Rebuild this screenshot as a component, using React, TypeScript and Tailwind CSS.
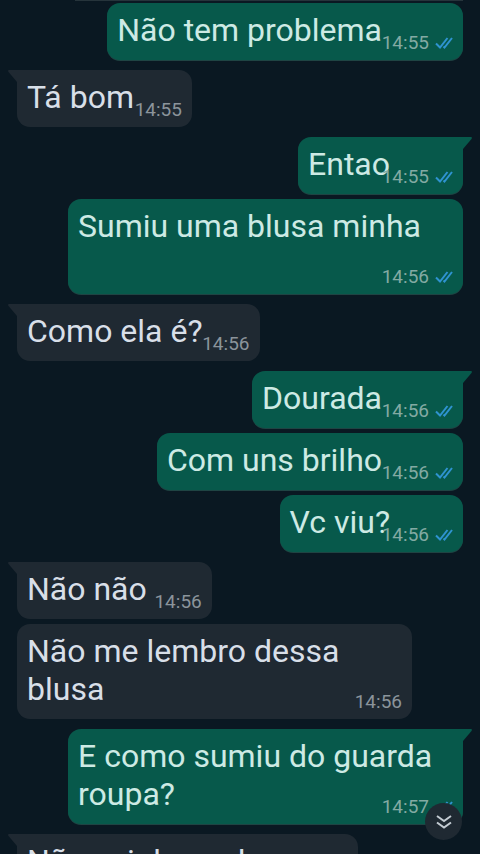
import { ReactNode } from 'react'

type Message = {
  text: ReactNode
  time: string
  sent?: boolean
  // first bubble of a group gets the little tail
  tail?: boolean
  // full-width bubble, time sits under the text
  wide?: boolean
  // room kept free beside the last line for the time
  room?: string
}

const groups: Message[][] = [
  [{ text: 'Não tem problema', time: '14:55', sent: true, room: 'pr-[71px]' }],
  [{ text: 'Tá bom', time: '14:55', tail: true, room: 'pr-[48px]' }],
  [
    { text: 'Entao', time: '14:55', sent: true, tail: true, room: 'pr-[63px]' },
    { text: 'Sumiu uma blusa minha', time: '14:56', sent: true, wide: true, room: 'pb-[38px]' },
  ],
  [{ text: 'Como ela é?', time: '14:56', tail: true, room: 'pr-[47px]' }],
  [
    { text: 'Dourada', time: '14:56', sent: true, tail: true, room: 'pr-[71px]' },
    { text: 'Com uns brilho', time: '14:56', sent: true, room: 'pr-[71px]' },
    { text: 'Vc viu?', time: '14:56', sent: true, room: 'pr-[63px]' },
  ],
  [
    { text: 'Não não', time: '14:56', tail: true, room: 'pr-[55px]' },
    { text: 'Não me lembro dessa blusa', time: '14:56', wide: true },
  ],
  [{ text: 'E como sumiu do guarda roupa?', time: '14:57', sent: true, tail: true, wide: true }],
  [{ text: 'Não sei de nenhum', time: '14:57', tail: true, room: 'pr-[47px]' }],
]

function Ticks() {
  return (
    <svg width="18" height="12" viewBox="0 0 18 12" fill="none" stroke="#2f93d0" strokeWidth="2" aria-label="Lida" role="img">
      <path d="M1 6.500l4 4L12.500 1" />
      <path d="M8.500 9.500l1 1L17 1" />
    </svg>
  )
}

function Bubble({ text, time, sent, tail, wide, room }: Message) {
  return (
    <div
      className={`relative px-[10px] pt-[8px] pb-[11px] rounded-[13px] ${sent ? 'self-end bg-[#07594b] shadow-[0_1px_0_#1f4443]' : 'self-start bg-[#1f2932]'} ${wide ? 'w-[395px] max-w-full' : ''} ${tail ? (sent ? 'rounded-tr-none' : 'rounded-tl-none') : ''}`}
    >
      {/* Tail */}
      {tail && (
        <svg
          width="9"
          height="12"
          viewBox="0 0 9 12"
          className={`absolute top-0 ${sent ? 'left-full' : 'right-full -scale-x-100'}`}
          fill={sent ? '#07594b' : '#1f2932'}
        >
          <path d="M0 0H8Q9.500 0 8.500 2L0 12Z" />
        </svg>
      )}

      <p className={`text-[32px] leading-[38px] ${sent ? 'text-[#cdeae4]' : 'text-[#d8dfe8]'} ${room ?? ''}`}>{text}</p>

      {/* Time and read mark */}
      <div className="absolute right-[10px] bottom-[6px] flex items-center gap-[6px]">
        <time className={`text-[19px] leading-[22px] ${sent ? 'text-[#83aaa3]' : 'text-[#8b949b]'}`}>{time}</time>
        {sent && <Ticks />}
      </div>
    </div>
  )
}

export default function App() {
  return (
    <main className="relative h-screen overflow-hidden bg-[#0a1822] font-[Roboto,sans-serif]">
      {/* Bottom edge of the message scrolled out above */}
      <div className="mx-[17px] flex justify-end">
        <div className="h-px w-[388px] bg-[#26343b]" />
      </div>

      {/* Messages */}
      <div className="flex flex-col gap-[10px] px-[17px] pt-[2px]">
        {groups.map((group, i) => (
          <section key={i} className="flex flex-col gap-[5px]">
            {group.map((message, j) => (
              <Bubble key={j} {...message} />
            ))}
          </section>
        ))}
      </div>

      {/* Jump to the latest message */}
      <button
        aria-label="Ir para o fim"
        className="absolute right-[18px] bottom-[14px] flex size-[37px] items-center justify-center rounded-full bg-[#1f2932]"
      >
        <svg width="16" height="16" viewBox="0 0 16 16" fill="none" stroke="#c3cbd2" strokeWidth="2">
          <path d="M1 2l7 5 7-5M1 8.500l7 5 7-5" />
        </svg>
      </button>
    </main>
  )
}
